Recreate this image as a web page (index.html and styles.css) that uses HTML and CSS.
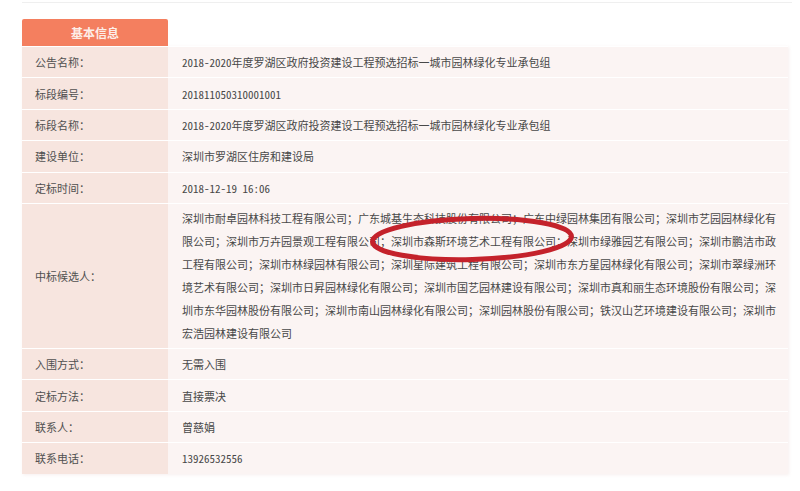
FILE: index.html
```html
<html>
<head>
	<meta http-equiv="Content-Type" content="text/html; charset=utf-8" />
	<title>基本信息</title>
	<link rel="stylesheet" href="styles.css">
</head>
<body>
	<div class="topline"></div>
	<div class="sheet">
		<div class="tab">基本信息</div>
		<div class="info">
			<div class="row">
				<div class="label">公告名称：</div>
				<div class="value">2018-2020年度罗湖区政府投资建设工程预选招标一城市园林绿化专业承包组</div>
			</div>
			<div class="row">
				<div class="label">标段编号：</div>
				<div class="value">201811050310001001</div>
			</div>
			<div class="row">
				<div class="label">标段名称：</div>
				<div class="value">2018-2020年度罗湖区政府投资建设工程预选招标一城市园林绿化专业承包组</div>
			</div>
			<div class="row">
				<div class="label">建设单位：</div>
				<div class="value">深圳市罗湖区住房和建设局</div>
			</div>
			<div class="row">
				<div class="label">定标时间：</div>
				<div class="value">2018-12-19 16:06</div>
			</div>
			<div class="row tall">
				<div class="label">中标候选人：</div>
				<div class="value list">深圳市耐卓园林科技工程有限公司；广东城基生态科技股份有限公司；广东中绿园林集团有限公司；深圳市艺园园林绿化有限公司；深圳市万卉园景观工程有限公司；深圳市森斯环境艺术工程有限公司；深圳市绿雅园艺有限公司；深圳市鹏洁市政工程有限公司；深圳市林绿园林有限公司；深圳星际建筑工程有限公司；深圳市东方星园林绿化有限公司；深圳市翠绿洲环境艺术有限公司；深圳市日昇园林绿化有限公司；深圳市国艺园林建设有限公司；深圳市真和丽生态环境股份有限公司；深圳市东华园林股份有限公司；深圳市南山园林绿化有限公司；深圳园林股份有限公司；铁汉山艺环境建设有限公司；深圳市宏浩园林建设有限公司
					<svg class="mark" width="620" height="145" viewBox="0 0 620 145">
						<ellipse cx="304" cy="35" rx="99.5" ry="20.5" transform="rotate(-1.5 304 35)" fill="none" stroke="#c4222b" stroke-width="5"/>
					</svg>
				</div>
			</div>
			<div class="row">
				<div class="label">入围方式：</div>
				<div class="value">无需入围</div>
			</div>
			<div class="row">
				<div class="label">定标方法：</div>
				<div class="value">直接票决</div>
			</div>
			<div class="row">
				<div class="label">联系人：</div>
				<div class="value">曾慈娟</div>
			</div>
			<div class="row">
				<div class="label">联系电话：</div>
				<div class="value">13926532556</div>
			</div>
		</div>
	</div>
</body>
</html>
```

FILE: styles.css
```css
body {
	margin: 0;
	background: #fff;
	font-family: 'Noto Sans CJK SC', 'Noto Sans', sans-serif;
	font-size: 11px;
	font-feature-settings: 'hwid';
	color: #4a4a4a;
}
.topline {
	height: 1px;
	margin: 2px 8px 0 22px;
	background: #efefef;
}
.sheet {
	width: 766px;
	margin: 16px 0 0 22px;
}
.tab {
	width: 146px;
	height: 27px;
	line-height: 27px;
	background: #f47f5f;
	border-radius: 2px 2px 0 0;
	text-align: center;
	color: #fdeee8;
	font-size: 12px;
	font-weight: bold;
}
.info {
	box-shadow: 1px 1px 3px rgba(200, 150, 140, 0.15);
}
.row {
	display: flex;
	height: 31.4px;
	border-top: 1px solid #fff;
	box-sizing: border-box;
}
.row.tall {
	height: 145px;
}
.label {
	width: 146px;
	padding-left: 13px;
	box-sizing: border-box;
	background: #f7e5df;
	display: flex;
	align-items: center;
	color: #505050;
}
.value {
	flex: 1;
	padding: 0 8px 0 14px;
	background: #fbf4f3;
	display: flex;
	align-items: center;
	color: #484848;
}
.value.list {
	display: block;
	position: relative;
	padding-top: 3px;
	line-height: 23px;
}
.mark {
	position: absolute;
	left: 0;
	top: 0;
}
```
